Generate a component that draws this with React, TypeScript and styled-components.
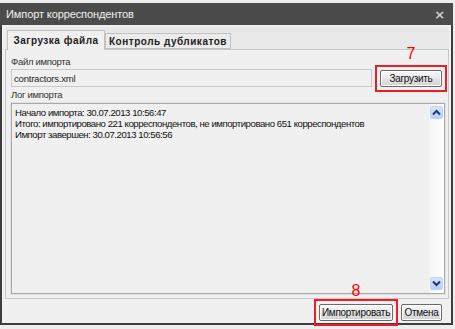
import React from "react";
import styled, { createGlobalStyle } from "styled-components";

const Global = createGlobalStyle`
  html, body { margin: 0; padding: 0; background: #f4f4f4; }
  body { font-family: "Liberation Sans", Arial, sans-serif; }
  #root { width: 455px; height: 329px; overflow: hidden; }
`;

const Desk = styled.div`
  width: 455px;
  height: 329px;
  padding-top: 3px;
  box-sizing: border-box;
  background: #eeeeee;
`;

const Win = styled.div`
  width: 453px;
  height: 322px;
  box-sizing: border-box;
  border: 2px solid #3d3d3d;
  border-top: none;
  background: #f0f0f0;
  display: flex;
  flex-direction: column;
`;

const TitleBar = styled.div`
  height: 22px;
  flex: none;
  background: #4b4b4b;
  color: #f2f2f2;
  display: flex;
  align-items: center;
  justify-content: space-between;
  padding: 0 8px 0 6px;
  font-size: 11px;
  letter-spacing: -0.1px;
  margin: 0 -2px;
`;

const Close = styled.span`
  color: #cfcfcf;
  font-size: 13px;
  font-weight: bold;
  font-family: "DejaVu Sans", sans-serif;
`;

const Body = styled.div`
  flex: 1;
  display: flex;
  flex-direction: column;
  padding: 2px 2px 0 3px;
`;

const TabStrip = styled.div`
  height: 22px;
  flex: none;
  background: #e8e8e8;
  display: flex;
  align-items: flex-end;
  padding-left: 2px;
`;

const Tab = styled.div<{ $active?: boolean; $w: number }>`
  width: ${(p) => p.$w}px;
  height: ${(p) => (p.$active ? 20 : 16)}px;
  box-sizing: border-box;
  border: 1px solid #c2c2c2;
  border-bottom: ${(p) => (p.$active ? "none" : "1px solid #c2c2c2")};
  margin-bottom: ${(p) => (p.$active ? -1 : 0)}px;
  background: ${(p) => (p.$active ? "#f0f0f0" : "#ececec")};
  font-weight: bold;
  font-size: 10px;
  letter-spacing: 0.5px;
  color: #222;
  display: flex;
  align-items: center;
  justify-content: center;
  position: relative;
  z-index: ${(p) => (p.$active ? 1 : 0)};
`;

const Panel = styled.div`
  height: 250px;
  flex: none;
  border: 1px solid #c8c8c8;
  background: #f0f0f0;
  padding: 6px 3px 4px 5px;
  box-sizing: border-box;
  display: flex;
  flex-direction: column;
`;

const Label = styled.div<{ $gap?: number }>`
  font-size: 9.5px;
  letter-spacing: -0.3px;
  color: #333;
  height: 12px;
  line-height: 12px;
  margin-top: ${(p) => p.$gap ?? 0}px;
`;

const Row = styled.div`
  display: flex;
  align-items: center;
  margin-top: 1px;
  gap: 8px;
  height: 18px;
  padding-right: 3px;
`;

const Input = styled.div`
  flex: 1;
  height: 18px;
  box-sizing: border-box;
  border: 1px solid #c9c9c9;
  background: #f0f0f0;
  font-size: 9.5px;
  letter-spacing: -0.2px;
  color: #222;
  display: flex;
  align-items: center;
  padding-left: 2px;
`;

const Marked = styled.div`
  position: relative;
  display: flex;
`;

const RedBox = styled.div`
  position: absolute;
  inset: -5px -5px -5px -5px;
  border: 2px solid #ee1c24;
  pointer-events: none;
`;

const MarkNum = styled.span<{ $top: number }>`
  position: absolute;
  top: ${(p) => p.$top}px;
  left: 50%;
  transform: translateX(-50%);
  color: #f00;
  font-size: 16px;
  font-family: "Liberation Sans", sans-serif;
`;

const Button = styled.div<{ $w: number }>`
  width: ${(p) => p.$w}px;
  height: 17px;
  box-sizing: border-box;
  border: 1px solid #6a6a6a;
  border-radius: 2px;
  background: linear-gradient(#fafafa, #e2e2e2 60%, #d2d2d2);
  box-shadow: inset 0 0 0 1px #fff;
  font-size: 10px;
  letter-spacing: -0.3px;
  color: #111;
  display: flex;
  align-items: center;
  justify-content: center;
`;

const LogBox = styled.div`
  flex: 1;
  margin-top: 2px;
  border: 1px solid #a9a9a9;
  box-shadow: 0 0 0 1px #e2e2e2;
  display: flex;
  background: #f0f0f0;
`;

const LogText = styled.div`
  flex: 1;
  padding: 3px 3px;
  font-size: 9.6px;
  letter-spacing: -0.45px;
  line-height: 11px;
  color: #111;
`;

const Scroll = styled.div`
  width: 15px;
  background: linear-gradient(90deg, #f4f4f4, #fff);
  display: flex;
  flex-direction: column;
  justify-content: space-between;
  padding: 2px 0 3px;
  align-items: center;
`;

const Arrow = styled.div`
  width: 13px;
  height: 13px;
  border-radius: 2px;
  background: linear-gradient(#d8e4fb, #b9cdf5);
  border: 1px solid #c4d3f3;
  box-sizing: border-box;
  display: flex;
  align-items: center;
  justify-content: center;
`;

const Footer = styled.div`
  flex: 1;
  display: flex;
  justify-content: flex-end;
  align-items: center;
  gap: 8px;
  padding: 2px 7px 0 0;
`;

const Chevron = ({ up }: { up?: boolean }) => (
  <svg width="9" height="7" viewBox="0 0 9 7">
    <path
      d={up ? "M1 5.5 L4.5 2 L8 5.5" : "M1 1.5 L4.5 5 L8 1.5"}
      stroke="#1d3a78"
      strokeWidth="2"
      fill="none"
    />
  </svg>
);

export default function App() {
  return (
    <>
      <Global />
      <Desk>
        <Win>
          <TitleBar>
            <span>Импорт корреспондентов</span>
            <Close>×</Close>
          </TitleBar>
          <Body>
            <TabStrip>
              <Tab $active $w={98}>Загрузка файла</Tab>
              <Tab $w={126}>Контроль дубликатов</Tab>
            </TabStrip>
            <Panel>
              <Label>Файл импорта</Label>
              <Row>
                <Input>contractors.xml</Input>
                <Marked>
                  <Button $w={62}>Загрузить</Button>
                  <RedBox />
                  <MarkNum $top={-25}>7</MarkNum>
                </Marked>
              </Row>
              <Label $gap={2}>Лог импорта</Label>
              <LogBox>
                <LogText>
                  Начало импорта: 30.07.2013 10:56:47
                  <br />
                  Итого: импортировано 221 корреспондентов, не импортировано 651 корреспондентов
                  <br />
                  Импорт завершен: 30.07.2013 10:56:56
                </LogText>
                <Scroll>
                  <Arrow>
                    <Chevron up />
                  </Arrow>
                  <Arrow>
                    <Chevron />
                  </Arrow>
                </Scroll>
              </LogBox>
            </Panel>
            <Footer>
              <Marked>
                <Button $w={74}>Импортировать</Button>
                <RedBox />
                <MarkNum $top={-22}>8</MarkNum>
              </Marked>
              <Button $w={41}>Отмена</Button>
            </Footer>
          </Body>
        </Win>
      </Desk>
    </>
  );
}
